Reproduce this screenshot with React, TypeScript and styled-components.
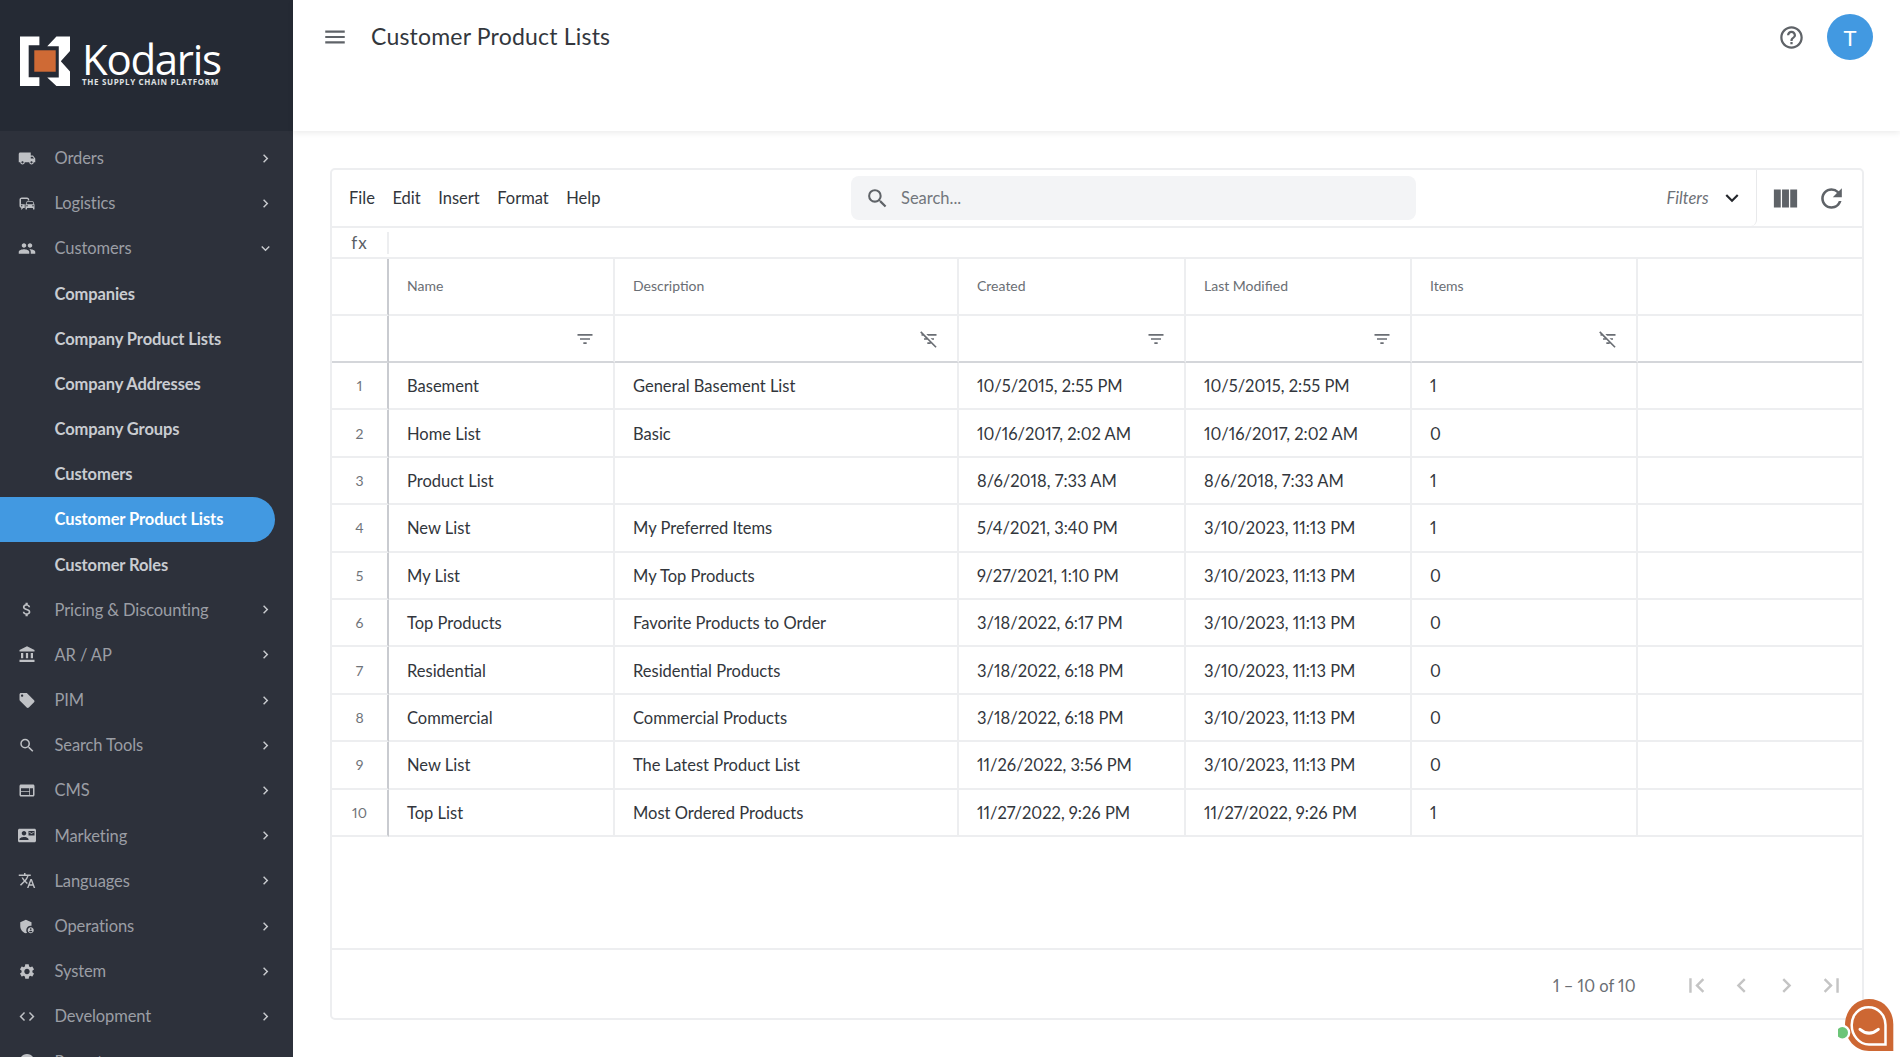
import React from "react";
import styled, { createGlobalStyle } from "styled-components";
import {
  MdLocalShipping, MdCommute, MdPeople, MdAttachMoney, MdAccountBalance, MdLocalOffer, MdSearch, MdWeb,
  MdContactMail, MdTranslate, MdAdminPanelSettings, MdSettings, MdCode, MdChevronRight, MdExpandMore,
  MdMenu, MdHelpOutline, MdFilterList, MdFilterListOff, MdViewColumn, MdRefresh, MdFirstPage, MdLastPage,
  MdChevronLeft, MdAccountCircle,
} from "react-icons/md";

const FONT = `"Lato", "Open Sans", sans-serif`;

const Global = createGlobalStyle`
  html, body { margin: 0; padding: 0; height: 100%; background: #fff; }
  body { font-family: ${FONT}; overflow: hidden; font-variant-numeric: proportional-nums; }
  * { box-sizing: border-box; }
`;

const Page = styled.div`display: flex; height: 1057px; width: 1900px; overflow: hidden; position: relative;`;
const Sidebar = styled.aside`width: 293px; flex: none; background: #2d313b; height: 100%; overflow: hidden;`;
const LogoArea = styled.div`height: 131px; background: #252a34; padding: 36px 0 0 20px; display: flex; gap: 12px;`;
const LogoText = styled.div`display: flex; flex-direction: column; color: #fff;`;
const Brand = styled.span`font: 400 42px/35px "Open Sans", sans-serif; letter-spacing: -1.3px; margin-top: 5px; height: 35px;`;
const Tag = styled.span`font: 700 8px/11px "Open Sans", sans-serif; letter-spacing: .65px; white-space: nowrap; color: #dfe0e2;`;
const Nav = styled.nav`padding-top: 4.5px;`;
const Row = styled.div<{ $active?: boolean; $sub?: boolean }>`
  height: 45.18px; width: 275px; display: flex; align-items: center; font-size: 16.5px; letter-spacing: -.1px;
  padding-left: ${p => (p.$sub ? "54.5px" : "18px")};
  color: ${p => (p.$active ? "#fff" : p.$sub ? "#c9ccd1" : "#9b9ea5")};
  font-weight: ${p => (p.$active || p.$sub ? 700 : 400)};
  background: ${p => (p.$active ? "#4299e1" : "transparent")};
  border-radius: 0 23px 23px 0;
`;
const NavIcon = styled.span`width: 18px; margin-right: 18.5px; display: flex; justify-content: center; color: #bfc1c5; font-size: 19px;`;
const NavLabel = styled.span`flex: 1;`;
const Caret = styled.span`display: flex; width: 20px; justify-content: center; color: #c9cbcf; font-size: 17px;`;

const Main = styled.main`flex: 1; min-width: 0; display: flex; flex-direction: column;`;
const Topbar = styled.header`height: 131px; flex: none; display: flex; align-items: flex-start; padding: 14px 27px 0 29px; box-shadow: 0 2px 6px rgba(0,0,0,.08); color: #5f6368;`;
const Burger = styled.span`font-size: 26px; display: flex; margin: 10px 23px 0 0;`;
const Title = styled.h1`flex: 1; margin: 6px 0 0; font-size: 23px; line-height: 32px; font-weight: 400; color: #33373d; letter-spacing: .2px;`;
const Help = styled.span`font-size: 27px; display: flex; margin: 10px 22px 0 0;`;
const Avatar = styled.div`width: 46px; height: 46px; border-radius: 50%; background: #4299e1; color: #fff; display: grid; place-items: center; font-size: 22px;`;

const Card = styled.section`margin: 37px 36px 0 37px; height: 852px; border: 2px solid #edeef0; border-radius: 5px; display: flex; flex-direction: column; color: #32363c;`;
const Toolbar = styled.div`height: 58px; flex: none; display: flex; align-items: center; border-bottom: 2px solid #edeef0;`;
const Menus = styled.div`width: 519px; padding-left: 17px; display: flex; gap: 17.5px; font-size: 16.5px;`;
const Search = styled.div`width: 565px; height: 44px; background: #f3f4f6; border-radius: 8px; display: flex; align-items: center; padding-left: 14px; gap: 11px; color: #72767c; font-size: 16.5px;`;
const SearchIcon = styled.span`font-size: 25px; display: flex; color: #5f6368;`;
const Filters = styled.div`flex: 1; height: 100%; display: flex; justify-content: flex-end; align-items: center; gap: 10px; padding-right: 11.5px; font-style: italic; font-size: 16.5px; color: #6c7076; border-right: 1px solid #e8e9eb; border-radius: 0 0 6px 0;`;
const FilterCaret = styled.span`display: flex; font-size: 26px; color: #24272c; font-style: normal;`;
const ToolIcons = styled.div`width: 105px; flex: none; display: flex; justify-content: center; align-items: center; gap: 15px; padding-right: 2px; font-size: 31px; color: #5f6368;`;
const FxRow = styled.div`height: 31px; flex: none; display: flex; align-items: center; border-bottom: 2px solid #edeef0;`;
const FxLabel = styled.div`width: 57px; height: 22px; text-align: center; line-height: 22px; font-size: 17px; letter-spacing: 1px; color: #5b5f66; border-right: 2px solid #edeef0;`;

const Grid = styled.div`display: grid; grid-template-columns: 57px 226px 344px 227px 226px 226px 1fr; flex: none;`;
const Cell = styled.div<{ $h: number; $idx?: boolean; $strong?: boolean; $last?: boolean }>`
  height: ${p => p.$h}px; display: flex; align-items: center; font-size: 16.5px; padding: 1px 0 0 18px;
  border-right: 2px solid ${p => (p.$idx ? "#c9cbd0" : "#edeef0")};
  border-bottom: 2px solid ${p => (p.$strong ? "#d4d6da" : "#edeef0")};
  ${p => p.$last && "border-right: none;"}
  ${p => p.$idx && "justify-content: center; padding: 0; font-size: 14px; color: #6f7379;"}
`;
const HeadCell = styled(Cell)`font-size: 14px; color: #6a6e74; padding-top: 0; padding-bottom: 2px;`;
const FilterCell = styled(Cell)`justify-content: flex-end; padding: 0 18px 0 0; font-size: 20px; color: #6a6e74;`;
const Spacer = styled.div`flex: 1; border-bottom: 2px solid #edeef0;`;
const Footer = styled.div`height: 68px; flex: none; display: flex; align-items: center; justify-content: flex-end; padding: 3px 16.5px 0 0; font-size: 16.5px; color: #6a6e74;`;
const PageInfo = styled.span`margin-right: 46px;`;
const PageIcons = styled.div`display: flex; gap: 16px; font-size: 29px; color: #c4c4c4;`;
const IconSlot = styled.span`display: flex;`;

const Chat = styled.div`position: absolute; right: 2px; bottom: 2px; width: 60px; height: 56px;`;

const Logo = () => (
  <svg width="50" height="50" viewBox="0 0 49 49" style={{ flex: "none" }}>
    <path fill="#fff" d="M0 0.5H19V9H8.5V40.5H19V49H0Z" />
    <path fill="#fff" d="M35.7 0.5H49V14.7L40 24.7L49 34.7V49H35.7L26.7 40.7H38V10H26.7Z" />
    <rect x="14" y="14" width="21" height="21" fill="#cf6a35" />
  </svg>
);

const items: { icon: React.ReactNode; label: string; open?: boolean; children?: string[] }[] = [
  { icon: <MdLocalShipping />, label: "Orders" },
  { icon: <MdCommute />, label: "Logistics" },
  { icon: <MdPeople />, label: "Customers", open: true, children: ["Companies", "Company Product Lists", "Company Addresses", "Company Groups", "Customers", "Customer Product Lists", "Customer Roles"] },
  { icon: <MdAttachMoney />, label: "Pricing & Discounting" },
  { icon: <MdAccountBalance />, label: "AR / AP" },
  { icon: <MdLocalOffer />, label: "PIM" },
  { icon: <MdSearch />, label: "Search Tools" },
  { icon: <MdWeb />, label: "CMS" },
  { icon: <MdContactMail />, label: "Marketing" },
  { icon: <MdTranslate />, label: "Languages" },
  { icon: <MdAdminPanelSettings />, label: "Operations" },
  { icon: <MdSettings />, label: "System" },
  { icon: <MdCode />, label: "Development" },
  { icon: <MdAccountCircle />, label: "Reports" },
];

const rows = [
  ["Basement", "General Basement List", "10/5/2015, 2:55 PM", "10/5/2015, 2:55 PM", "1"],
  ["Home List", "Basic", "10/16/2017, 2:02 AM", "10/16/2017, 2:02 AM", "0"],
  ["Product List", "", "8/6/2018, 7:33 AM", "8/6/2018, 7:33 AM", "1"],
  ["New List", "My Preferred Items", "5/4/2021, 3:40 PM", "3/10/2023, 11:13 PM", "1"],
  ["My List", "My Top Products", "9/27/2021, 1:10 PM", "3/10/2023, 11:13 PM", "0"],
  ["Top Products", "Favorite Products to Order", "3/18/2022, 6:17 PM", "3/10/2023, 11:13 PM", "0"],
  ["Residential", "Residential Products", "3/18/2022, 6:18 PM", "3/10/2023, 11:13 PM", "0"],
  ["Commercial", "Commercial Products", "3/18/2022, 6:18 PM", "3/10/2023, 11:13 PM", "0"],
  ["New List", "The Latest Product List", "11/26/2022, 3:56 PM", "3/10/2023, 11:13 PM", "0"],
  ["Top List", "Most Ordered Products", "11/27/2022, 9:26 PM", "11/27/2022, 9:26 PM", "1"],
];

const heads = ["Name", "Description", "Created", "Last Modified", "Items"];
const filterOff = [false, true, false, false, true];

export default function App() {
  return (
    <Page>
      <Global />
      <Sidebar>
        <LogoArea>
          <Logo />
          <LogoText>
            <Brand>Kodaris</Brand>
            <Tag>THE SUPPLY CHAIN PLATFORM</Tag>
          </LogoText>
        </LogoArea>
        <Nav>
          {items.map(it => (
            <React.Fragment key={it.label}>
              <Row>
                <NavIcon>{it.icon}</NavIcon>
                <NavLabel>{it.label}</NavLabel>
                <Caret>{it.open ? <MdExpandMore /> : <MdChevronRight />}</Caret>
              </Row>
              {it.children?.map(c => (
                <Row key={c} $sub $active={c === "Customer Product Lists"}>{c}</Row>
              ))}
            </React.Fragment>
          ))}
        </Nav>
      </Sidebar>
      <Main>
        <Topbar>
          <Burger><MdMenu /></Burger>
          <Title>Customer Product Lists</Title>
          <Help><MdHelpOutline /></Help>
          <Avatar>T</Avatar>
        </Topbar>
        <Card>
          <Toolbar>
            <Menus>{["File", "Edit", "Insert", "Format", "Help"].map(m => <span key={m}>{m}</span>)}</Menus>
            <Search><SearchIcon><MdSearch /></SearchIcon>Search...</Search>
            <Filters>Filters<FilterCaret><MdExpandMore /></FilterCaret></Filters>
            <ToolIcons><IconSlot><MdViewColumn /></IconSlot><IconSlot><MdRefresh /></IconSlot></ToolIcons>
          </Toolbar>
          <FxRow><FxLabel>fx</FxLabel></FxRow>
          <Grid>
            <Cell $h={57} $idx />
            {heads.map(h => <HeadCell key={h} $h={57}>{h}</HeadCell>)}
            <Cell $h={57} $last />
            <Cell $h={47} $idx $strong />
            {filterOff.map((off, i) => <FilterCell key={i} $h={47} $strong>{off ? <MdFilterListOff /> : <MdFilterList />}</FilterCell>)}
            <Cell $h={47} $strong $last />
            {rows.map((r, i) => (
              <React.Fragment key={i}>
                <Cell $h={47.4} $idx>{i + 1}</Cell>
                {r.map((v, j) => <Cell key={j} $h={47.4}>{v}</Cell>)}
                <Cell $h={47.4} $last />
              </React.Fragment>
            ))}
          </Grid>
          <Spacer />
          <Footer>
            <PageInfo>1 – 10 of 10</PageInfo>
            <PageIcons>
              <IconSlot><MdFirstPage /></IconSlot>
              <IconSlot><MdChevronLeft /></IconSlot>
              <IconSlot><MdChevronRight /></IconSlot>
              <IconSlot><MdLastPage /></IconSlot>
            </PageIcons>
          </Footer>
        </Card>
      </Main>
      <Chat>
        <svg width="60" height="56" viewBox="0 0 60 56">
          <path d="M7 26C7 11 18 0 31 0C45 0 55.3 11 55.3 25V52H31C18 52 7 41 7 26Z" fill="#cd6733" />
          <path d="M13.7 26C13.7 16 21 8.3 30.5 8.3C40 8.3 47.5 16 47.5 26V45.5H31C21 45.5 13.7 36 13.7 26Z" fill="none" stroke="#fff" strokeWidth="2.5" />
          <path d="M22 30.3Q31 38 40.3 30.3" fill="none" stroke="#fff" strokeWidth="3" strokeLinecap="round" />
          <circle cx="4.3" cy="33.7" r="8" fill="#fff" />
          <circle cx="4.3" cy="33.7" r="5.7" fill="#6cc578" />
        </svg>
      </Chat>
    </Page>
  );
}
